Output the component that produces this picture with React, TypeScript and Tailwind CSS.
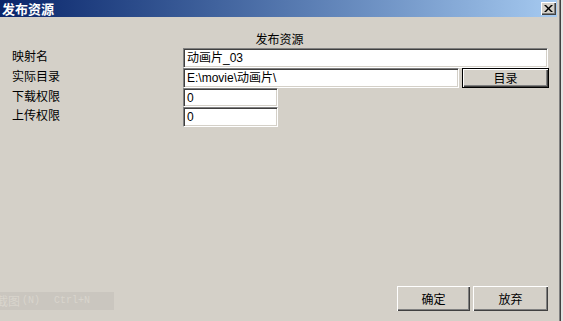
const cjk = { fontFamily: '"Noto Sans CJK SC", "Liberation Sans", sans-serif' };
const mixed = { fontFamily: '"Liberation Sans", "Noto Sans CJK SC", sans-serif' };

function Field({ value, width }: { value: string; width: string }) {
  return (
    <div
      className={`${width} h-full flex items-center bg-white border-t border-l border-t-[#808080] border-l-[#808080] border-b border-r border-b-white border-r-white shadow-[inset_1px_1px_0_#404040,inset_-1px_-1px_0_#d4d0c8] pl-[3px] text-[12px] text-black leading-none`}
      style={mixed}
    >
      {value}
    </div>
  );
}

function Button({ label, width, isDefault }: { label: string; width: string; isDefault?: boolean }) {
  return (
    <div
      className={`${width} h-full flex items-center justify-center bg-[#d4d0c8] text-[12px] text-black leading-none ${
        isDefault
          ? "border border-black shadow-[inset_1px_1px_0_#ffffff,inset_-1px_-1px_0_#404040,inset_-2px_-2px_0_#808080]"
          : "shadow-[inset_1px_1px_0_#ffffff,inset_-1px_-1px_0_#404040,inset_-2px_-2px_0_#808080]"
      }`}
      style={cjk}
    >
      {label}
    </div>
  );
}

const ROWS = [
  { label: "映射名", h: "h-[20px]" },
  { label: "实际目录", h: "h-[20px]" },
  { label: "下载权限", h: "h-[19px]" },
  { label: "上传权限", h: "h-[20px]" },
];

export default function App() {
  return (
    <div className="relative w-[563px] h-[321px] flex overflow-hidden bg-[#d4d0c8]" style={cjk}>
      {/* dialog */}
      <div className="w-[559px] h-full flex flex-col bg-[#d4d0c8]">
        {/* title bar */}
        <div className="h-[17px] mr-[2px] flex items-center bg-gradient-to-r from-[#0a246a] to-[#a6caf0]">
          <span className="pl-[2px] text-[13px] font-bold text-white leading-none">发布资源</span>
          <div className="ml-auto mr-[1px] w-[15px] h-[13px] flex items-center justify-center bg-[#d4d0c8] shadow-[inset_1px_1px_0_#ffffff,inset_-1px_-1px_0_#404040,inset_-2px_-2px_0_#808080]">
            <svg width="9" height="7" viewBox="0 0 9 7">
              <path d="M0 0h2l2.5 2.5L7 0h2L5.5 3.5 9 7H7L4.5 4.5 2 7H0l3.5-3.5z" fill="#000" />
            </svg>
          </div>
        </div>

        <div className="mt-[15px] text-center text-[12px] leading-[14px] text-black">发布资源</div>

        <div className="mt-[2px] pl-[12px] flex flex-col">
          {ROWS.map((row, i) => (
            <div key={row.label} className={`${row.h} flex items-stretch`}>
              <div className="w-[171px] flex items-center pb-[4px] text-[12px] leading-none text-black">{row.label}</div>
              {i === 0 && <Field value="动画片_03" width="w-[365px]" />}
              {i === 1 && (
                <div className="flex gap-[3px] h-full">
                  <Field value="E:\movie\动画片\" width="w-[276px]" />
                  <Button label="目录" width="w-[87px]" isDefault />
                </div>
              )}
              {i >= 2 && <Field value="0" width="w-[95px]" />}
            </div>
          ))}
        </div>

        <div className="flex-1" />

        <div className="h-[25px] mb-[10px] pr-[11px] flex justify-end gap-[3px]">
          <Button label="确定" width="w-[73px]" />
          <Button label="放弃" width="w-[75px]" />
        </div>
      </div>

      {/* window edge */}
      <div className="w-[1px] h-full bg-[#808080]" />
      <div className="w-[1px] h-full bg-[#404040]" />
      <div className="w-[2px] h-full bg-[#e4e4e4]" />

      {/* faint screenshot-tool hint overlay */}
      <div className="absolute left-0 top-[292px] w-[114px] h-[18px] flex items-center overflow-hidden bg-[#cac6bf] text-[#d9d5cd] text-[12px] leading-none whitespace-nowrap">
        <span className="ml-[-4px]">截图</span>
        <span className="ml-[2px] text-[10px]" style={{ fontFamily: '"Liberation Mono", monospace' }}>
          (N)
        </span>
        <span className="ml-[14px] text-[10px]" style={{ fontFamily: '"Liberation Mono", monospace' }}>
          Ctrl+N
        </span>
      </div>
    </div>
  );
}
